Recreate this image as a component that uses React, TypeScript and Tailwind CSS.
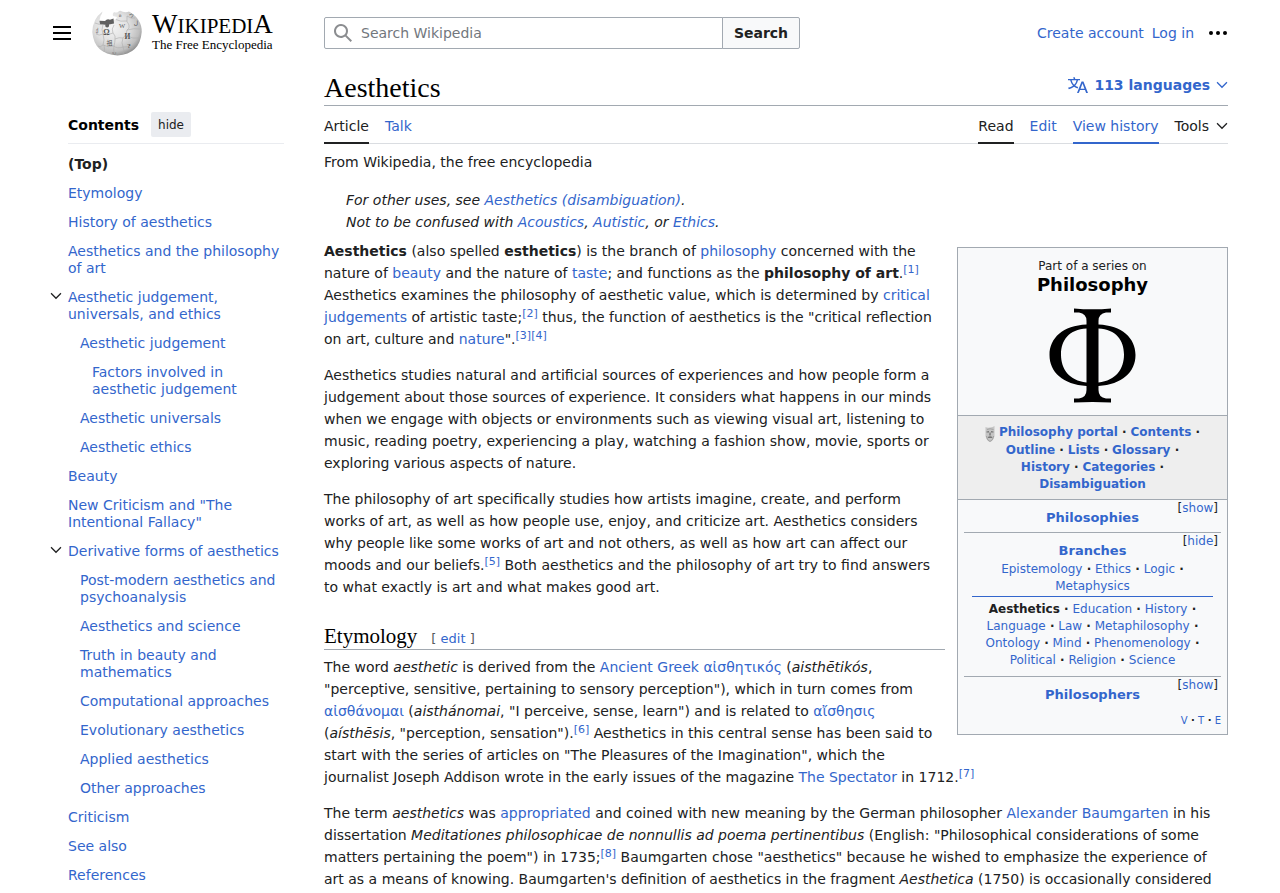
import type { ReactNode } from "react";

const LINK = "text-[#3366cc] hover:underline";

function A({ children, className = "" }: { children: ReactNode; className?: string }) {
  return (
    <a href="#" className={`${LINK} ${className}`}>
      {children}
    </a>
  );
}

function Ref({ n }: { n: number }) {
  return (
    <sup className="text-[11px]">
      <A>[{n}]</A>
    </sup>
  );
}

function Chevron() {
  return (
    <svg viewBox="0 0 20 20" className="size-3 shrink-0" fill="currentColor" aria-hidden="true">
      <path d="m17.5 4.75-7.5 7.5-7.5-7.5L1 6.25l9 9 9-9z" />
    </svg>
  );
}

function Globe() {
  return (
    <svg viewBox="0 0 50 46" className="h-[46px] w-[50px] shrink-0" aria-hidden="true">
      <defs>
        <radialGradient id="ball" cx="0.4" cy="0.36" r="0.68">
          <stop offset="0" stopColor="#f4f4f4" />
          <stop offset="0.5" stopColor="#e0e0e0" />
          <stop offset="0.82" stopColor="#bfbfbf" />
          <stop offset="1" stopColor="#8c8c8c" />
        </radialGradient>
      </defs>
      <path
        d="M10.500 1.500Q10 4 8.500 6L7.500 10.500L12 12L20 11L24 9L25 7L21 6Q20 4 22 2Q24 3 26 2Q28 0 30 1.500Q34 3 37 1.500Q50 9 49.700 22Q48 44 25.500 45.500Q2 44 .3 22Q.5 9 10.500 1.500Z"
        fill="url(#ball)"
      />
      <path d="M7.500 10.800L13 11Q15 8.500 18 9.800L21.500 8.500L22 13.500L17 14.500Q17.500 17.500 15 17.500Q12.500 17 13.500 14.800L8 14.200Z" fill="#606060" />
      <path
        d="M3 13Q8 15 11 14.500Q9 20 11 24Q7 26 4 24M11 24Q15 26 21 23Q19 19 22 15M21 23Q24 26 23 29Q27 27 31 28Q35 25 35 20Q38 19 37 15Q34 12 35 6Q39 9 43 8M24 9.500Q28 12 35 11M35 20Q42 18 48 19M31 28Q29 33 31 37Q36 36 41 38M31 37Q25 39 22 36Q23 32 23 29M22 36Q16 38 11 35Q13 30 11 24M11 35Q8 38 6 36M22 36Q21 41 23 45M31 37Q33 41 31 44M35 26Q41 29 47 28M12 35Q13 40 12 42"
        fill="none"
        stroke="#adadad"
        strokeWidth="0.6"
      />
      <g fill="#555" fontFamily="'Liberation Serif', 'DejaVu Sans', serif" textAnchor="middle">
        <text x="14.5" y="25" fontSize="8" fontWeight="bold">Ω</text>
        <text x="30" y="18" fontSize="6.5">W</text>
        <text x="35.5" y="29" fontSize="7.5" fontWeight="bold">И</text>
        <text x="17.5" y="35" fontSize="6" fontFamily="'Noto Sans CJK JP', sans-serif">祖</text>
        <text x="44" y="15" fontSize="6">ل</text>
        <text x="37" y="38" fontSize="7" fontWeight="bold">?</text>
        <text x="22" y="44" fontSize="5">ய</text>
        <text x="28" y="7" fontSize="5">й</text>
        <text x="39" y="7" fontSize="5">ウ</text>
        <text x="5" y="22" fontSize="5">ქ</text>
      </g>
    </svg>
  );
}

function Header() {
  return (
    <header className="grid h-[66px] grid-cols-[240px_minmax(0,1fr)] items-center gap-10">
      <div className="flex items-center">
        <button type="button" aria-label="Main menu" className="flex size-9 items-center justify-center">
          <svg viewBox="0 0 20 20" className="size-5" fill="#000" aria-hidden="true">
            <path d="M1 3v2h18V3zm0 8h18V9H1zm0 6h18v-2H1z" />
          </svg>
        </button>
        <a href="#" aria-label="Wikipedia" className="ml-3 flex items-center gap-2.5 font-['Liberation_Serif',serif] text-black">
          <Globe />
          <span className="flex flex-col whitespace-nowrap">
            <span className="text-[21px] leading-[20px]">
              <span className="text-[27px] leading-[20px]">W</span>IKIPEDI
              <span className="text-[27px] leading-[20px]">A</span>
            </span>
            <span className="text-[13px] leading-[17px]">The Free Encyclopedia</span>
          </span>
        </a>
      </div>
      <div className="flex items-center justify-between gap-6">
        <form className="flex h-8 w-[476px] min-w-0" role="search" onSubmit={(e) => e.preventDefault()}>
          <label className="flex min-w-0 flex-1 items-center gap-2 rounded-l-[2px] border border-[#a2a9b1] bg-white pl-2">
            <svg viewBox="0 0 20 20" className="size-5 shrink-0" fill="#8b8d90" aria-hidden="true">
              <path d="M12.2 13.6a7 7 0 1 1 1.4-1.4l5.4 5.4-1.4 1.4zM3 8a5 5 0 1 0 10 0A5 5 0 0 0 3 8" />
            </svg>
            <input
              type="search"
              aria-label="Search Wikipedia"
              placeholder="Search Wikipedia"
              className="min-w-0 flex-1 bg-transparent text-sm outline-none placeholder:text-[#72777d]"
            />
          </label>
          <button type="submit" className="-ml-px w-[78px] rounded-r-[2px] border border-[#a2a9b1] bg-[#f8f9fa] text-sm font-bold">
            Search
          </button>
        </form>
        <nav aria-label="Personal tools" className="flex items-center gap-2 whitespace-nowrap">
          <A>Create account</A>
          <A>Log in</A>
          <button type="button" aria-label="More options" className="ml-1.5">
            <svg viewBox="0 0 20 20" className="size-5" fill="#000" aria-hidden="true">
              <circle cx="3" cy="10" r="2" />
              <circle cx="10" cy="10" r="2" />
              <circle cx="17" cy="10" r="2" />
            </svg>
          </button>
        </nav>
      </div>
    </header>
  );
}

type Item = { label: string; open?: boolean; children?: Item[] };

const CONTENTS: Item[] = [
  { label: "Etymology" },
  { label: "History of aesthetics" },
  { label: "Aesthetics and the philosophy of art" },
  {
    label: "Aesthetic judgement, universals, and ethics",
    open: true,
    children: [
      { label: "Aesthetic judgement", children: [{ label: "Factors involved in aesthetic judgement" }] },
      { label: "Aesthetic universals" },
      { label: "Aesthetic ethics" },
    ],
  },
  { label: "Beauty" },
  { label: 'New Criticism and "The Intentional Fallacy"' },
  {
    label: "Derivative forms of aesthetics",
    open: true,
    children: [
      { label: "Post-modern aesthetics and psychoanalysis" },
      { label: "Aesthetics and science" },
      { label: "Truth in beauty and mathematics" },
      { label: "Computational approaches" },
      { label: "Evolutionary aesthetics" },
      { label: "Applied aesthetics" },
      { label: "Other approaches" },
    ],
  },
  { label: "Criticism" },
  { label: "See also" },
  { label: "References" },
];

function TocItem({ item }: { item: Item }) {
  return (
    <li>
      <div className="flex items-start">
        <div className="flex w-6 shrink-0 justify-center pt-[7px]">
          {item.open && (
            <button type="button" aria-label={`Toggle ${item.label} subsection`}>
              <Chevron />
            </button>
          )}
        </div>
        <a href="#" className={`min-w-0 flex-1 py-1.5 ${LINK}`}>
          {item.label}
        </a>
      </div>
      {item.children && (
        <ul className="pl-3">
          {item.children.map((c) => (
            <TocItem key={c.label} item={c} />
          ))}
        </ul>
      )}
    </li>
  );
}

function Toc() {
  return (
    <nav aria-label="Contents" className="pt-[46px] leading-[17px]">
      <div className="ml-6 flex items-center gap-3 border-b border-[#eaecf0] pb-1.5">
        <h2 className="pt-0.5 font-bold text-black">Contents</h2>
        <button type="button" className="h-[25px] rounded-[2px] bg-[#eaecf0] px-[7px] text-xs">
          hide
        </button>
      </div>
      <ul className="pt-1.5">
        <li className="ml-6 py-1.5 font-bold">
          <a href="#">(Top)</a>
        </li>
        {CONTENTS.map((c) => (
          <TocItem key={c.label} item={c} />
        ))}
      </ul>
    </nav>
  );
}

function Tab({ label, active, hover }: { label: string; active?: boolean; hover?: boolean }) {
  const tone = active
    ? "border-[#202122] text-[#202122]"
    : hover
      ? "border-[#3366cc] text-[#3366cc]"
      : "border-transparent text-[#3366cc]";
  return (
    <a href="#" className={`-mb-px border-b-2 pt-3 pb-[7px] leading-[17px] ${tone}`}>
      {label}
    </a>
  );
}

function DotList({ items, bold }: { items: ReactNode[]; bold?: boolean }) {
  return (
    <>
      {items.map((it, i) => (
        <span key={i}>
          <span className="whitespace-nowrap">
            {typeof it === "string" ? <A className={bold ? "font-bold" : ""}>{it}</A> : it}
            {i < items.length - 1 && <b> ·</b>}
          </span>{" "}
        </span>
      ))}
    </>
  );
}

function Toggle({ label }: { label: string }) {
  return (
    <div className="px-[3px] text-right leading-[17px]">
      [<button type="button" className={LINK}>{label}</button>]
    </div>
  );
}

function GroupTitle({ children }: { children: ReactNode }) {
  return (
    <h3 className="-mt-2 text-[13px] leading-[17px] font-bold">
      <A>{children}</A>
    </h3>
  );
}

function Infobox() {
  return (
    <aside className="float-right mt-[7px] mb-3 ml-3 w-[271px] border border-[#a2a9b1] bg-[#f8f9fa] text-center text-xs leading-[17px]">
      <div className="pt-2.5 pb-3">
        <p>Part of a series on</p>
        <p className="text-[18px] leading-5 font-bold">
          <a href="#" className="text-black">Philosophy</a>
        </p>
        <svg viewBox="0 0 87 95" className="mx-auto mt-[13px] h-[95px] w-[87px]" role="img" aria-label="Phi">
          <path
            d="M25 .5Q43.500 2.200 62 .5V4.500H57Q49.500 5.500 49.500 13V16.500C73 17.500 86.500 30 86.500 47S73 76.500 49.500 78V82Q49.500 89.500 57 90.500H62V94.500Q43.500 93.500 25 94.500V90.500H30Q37.500 89.500 37.500 82V78C14 76.500 .5 64 .5 47S14 17.500 37.500 16.500V13Q37.500 5.500 30 4.500H25ZM37.500 20.500C20 21.500 12 32 12 46.500S20 72.500 37.500 74.500ZM49.500 20.500V74.500C67 72.500 75 61 75 46.500S67 21.500 49.500 20.500Z"
            fill="#000"
            fillRule="evenodd"
          />
        </svg>
      </div>
      <div className="border-y border-[#a2a9b1] bg-[#eeeeee] px-6 pt-2 pb-1.5">
        <svg viewBox="0 0 10 16" className="mr-1 inline-block h-4 w-2.5 align-[-6px]" aria-hidden="true">
          <path d="M.5 1Q2 2 5 1.500T9.500 0V10Q8.500 15 5 16Q1.500 15 .5 10Z" fill="#c4c4c4" />
          <path d="M1.500 5.500L4 5V6.500H1.500ZM6 5L8.500 5.500V6.500H6ZM4.500 6.500H5.700V9.500H4.200ZM2.800 11Q5 9.500 7.500 11L7 12H3.200Z" fill="#777" />
          <path d="M1.500 10Q2 14.500 5 15.500Q8 14.500 8.700 10M2 3.500Q5 2 8.500 3.500" fill="none" stroke="#999" strokeWidth="0.8" />
        </svg>
        <DotList
          bold
          items={["Philosophy portal", "Contents", "Outline", "Lists", "Glossary", "History", "Categories", "Disambiguation"]}
        />
      </div>
      <div className="px-1.5">
        <section className="pb-1.5">
          <Toggle label="show" />
          <GroupTitle>Philosophies</GroupTitle>
        </section>
        <section className="border-t border-[#a2a9b1] pb-[7px]">
          <Toggle label="hide" />
          <GroupTitle>Branches</GroupTitle>
          <div className="mx-2 mt-0.5 border-b border-[#3366cc] pb-px">
            <DotList items={["Epistemology", "Ethics", "Logic", "Metaphysics"]} />
          </div>
          <div className="mx-2 pt-1">
            <DotList
              items={[
                <b key="a">Aesthetics</b>,
                "Education",
                "History",
                "Language",
                "Law",
                "Metaphilosophy",
                "Ontology",
                "Mind",
                "Phenomenology",
                "Political",
                "Religion",
                "Science",
              ]}
            />
          </div>
        </section>
        <section className="border-t border-[#a2a9b1] pb-[9px]">
          <Toggle label="show" />
          <GroupTitle>Philosophers</GroupTitle>
        </section>
        <div className="pb-[5px] text-right text-[10px]">
          <DotList items={["V", "T", "E"]} />
        </div>
      </div>
    </aside>
  );
}

function Article() {
  return (
    <main className="min-w-0">
      <div className="flex items-end justify-between border-b border-[#a2a9b1] pt-1">
        <h1 className="font-['Liberation_Serif',serif] text-[28px] leading-[35px] text-black">Aesthetics</h1>
        <button type="button" className="mb-[9px] flex items-center gap-1.5 font-bold text-[#3366cc]">
          <svg viewBox="0 0 20 20" className="size-5" fill="currentColor" aria-hidden="true">
            <path d="M20 18h-1.440a.61.61 0 0 1-.4-.12.81.81 0 0 1-.23-.31L17 15h-5l-1 2.540a.77.77 0 0 1-.22.3.59.59 0 0 1-.4.14H9l4.550-11.470h1.890zm-3.530-4.310L14.890 9.500a11.620 11.620 0 0 1-.39-1.240q-.09.37-.19.69l-.19.56-1.580 4.190zm-6.300-1.580a13.430 13.430 0 0 1-2.910-1.410 11.460 11.460 0 0 0 2.810-5.370H12V4H7.310a4 4 0 0 0-.2-.56C6.870 2.790 6.600 2 6.600 2l-1.470.5s.4.89.6 1.500H0v1.330h2.150A11.230 11.230 0 0 0 5 10.700a17.190 17.190 0 0 1-5 2.100q.56.82.87 1.380a23.280 23.280 0 0 0 5.220-2.510 15.640 15.640 0 0 0 3.560 1.770zM3.630 5.330h4.910a8.110 8.110 0 0 1-2.450 4.450 9.110 9.110 0 0 1-2.460-4.450z" />
          </svg>
          <span>113 languages</span>
          <Chevron />
        </button>
      </div>
      <div className="flex justify-between border-b border-[#dadde1]">
        <nav aria-label="Namespaces" className="flex gap-4">
          <Tab label="Article" active />
          <Tab label="Talk" />
        </nav>
        <nav aria-label="Views" className="flex gap-4">
          <Tab label="Read" active />
          <Tab label="Edit" />
          <Tab label="View history" hover />
          <button type="button" className="flex items-center gap-[7px] pt-[3px]">
            Tools
            <Chevron />
          </button>
        </nav>
      </div>

      <p className="mt-[7px]">From Wikipedia, the free encyclopedia</p>
      <div className="mt-4 mb-[7px] pl-[22px] italic">
        <p>
          For other uses, see <A>Aesthetics (disambiguation)</A>.
        </p>
        <p>
          Not to be confused with <A>Acoustics</A>, <A>Autistic</A>, or <A>Ethics</A>.
        </p>
      </div>

      <Infobox />

      <p className="mb-3.5">
        <b>Aesthetics</b> (also spelled <b>esthetics</b>) is the branch of <A>philosophy</A> concerned with the nature of{" "}
        <A>beauty</A> and the nature of <A>taste</A>; and functions as the <b>philosophy of art</b>.<Ref n={1} /> Aesthetics
        examines the philosophy of aesthetic value, which is determined by <A>critical judgements</A> of artistic taste;
        <Ref n={2} /> thus, the function of aesthetics is the "critical reflection on art, culture and <A>nature</A>".
        <Ref n={3} />
        <Ref n={4} />
      </p>
      <p className="mb-3.5">
        Aesthetics studies natural and artificial sources of experiences and how people form a judgement about those sources of
        experience. It considers what happens in our minds when we engage with objects or environments such as viewing visual
        art, listening to music, reading poetry, experiencing a play, watching a fashion show, movie, sports or exploring
        various aspects of nature.
      </p>
      <p>
        The philosophy of art specifically studies how artists imagine, create, and perform works of art, as well as how people
        use, enjoy, and criticize art. Aesthetics considers why people like some works of art and not others, as well as how art
        can affect our moods and our beliefs.
        <Ref n={5} /> Both aesthetics and the philosophy of art try to find answers to what exactly is art and what makes good
        art.
      </p>

      <div className="mt-[26px] mb-1.5 flex items-baseline gap-3.5 border-b border-[#a2a9b1]">
        <h2 className="font-['Liberation_Serif',serif] text-[21px] leading-[25px] text-black">Etymology</h2>
        <span className="text-[13px] leading-5 text-[#54595d]">
          [ <A>edit</A> ]
        </span>
      </div>

      <p className="mb-3.5">
        The word <i>aesthetic</i> is derived from the <A>Ancient Greek</A> <A>αἰσθητικός</A> (<i>aisthētikós</i>, "perceptive,
        sensitive, pertaining to sensory perception"), which in turn comes from <A>αἰσθάνομαι</A> (<i>aisthánomai</i>, "I
        perceive, sense, learn") and is related to <A>αἴσθησις</A> (<i>aísthēsis</i>, "perception, sensation").
        <Ref n={6} /> Aesthetics in this central sense has been said to start with the series of articles on "The Pleasures of
        the Imagination", which the journalist Joseph Addison wrote in the early issues of the magazine <A>The Spectator</A> in
        1712.
        <Ref n={7} />
      </p>
      <p>
        The term <i>aesthetics</i> was <A>appropriated</A> and coined with new meaning by the German philosopher{" "}
        <A>Alexander Baumgarten</A> in his dissertation{" "}
        <i>Meditationes philosophicae de nonnullis ad poema pertinentibus</i> (English: "Philosophical considerations of some
        matters pertaining the poem") in 1735;
        <Ref n={8} /> Baumgarten chose "aesthetics" because he wished to emphasize the experience of art as a means of knowing.
        Baumgarten's definition of aesthetics in the fragment <i>Aesthetica</i> (1750) is occasionally considered
      </p>
    </main>
  );
}

export default function App() {
  return (
    <div className="bg-white pr-[52px] pl-11 font-['DejaVu_Sans',sans-serif] text-sm leading-[22px] text-[#202122]">
      <Header />
      <div className="grid grid-cols-[240px_minmax(0,1fr)] gap-10">
        <Toc />
        <Article />
      </div>
    </div>
  );
}
